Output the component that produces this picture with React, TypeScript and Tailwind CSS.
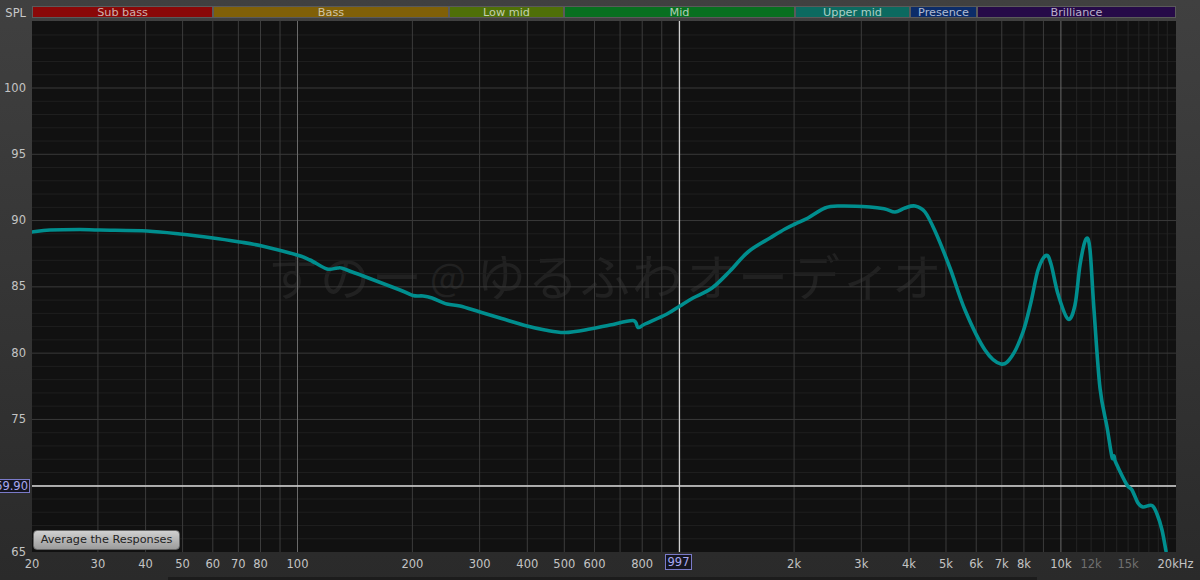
const xOf = (f: number) => 297.5 + Math.log10(f / 100) * 381.7
const yOf = (db: number) => 88 + (100 - db) * 13.257

const bands = [
  { name: 'Sub bass', w: 181, cls: 'bg-[#8a0808] text-[#d0b0ac]' },
  { name: 'Bass', w: 236, cls: 'bg-[#806008] text-[#d0c4a4]' },
  { name: 'Low mid', w: 115, cls: 'bg-[#4f7008] text-[#c4d0ac]' },
  { name: 'Mid', w: 231, cls: 'bg-[#087020] text-[#b0d0b8]' },
  { name: 'Upper mid', w: 115, cls: 'bg-[#0c6a60] text-[#acd0c8]' },
  { name: 'Presence', w: 67, cls: 'bg-[#0c2c68] text-[#b0bcd4]' },
  { name: 'Brilliance', w: 199, cls: 'bg-[#260a48] text-[#bcb0cc]' },
]

const levels = [100, 95, 90, 85, 80, 75, 70, 65]

const majorF = [30, 40, 50, 60, 70, 80, 90, 200, 300, 400, 500, 600, 700, 800, 900, 2000, 3000, 4000, 5000, 6000, 7000, 8000, 9000]
const minorF = [11000, 12000, 13000, 14000, 15000, 16000, 17000, 18000, 19000]
const decades = [100, 1000, 10000]

const xLabels = [
  { t: '20', x: 32 }, { t: '30', f: 30 }, { t: '40', f: 40 }, { t: '50', f: 50 }, { t: '60', f: 60 },
  { t: '70', f: 70 }, { t: '80', f: 80 }, { t: '100', f: 100 }, { t: '200', f: 200 }, { t: '300', f: 300 },
  { t: '400', f: 400 }, { t: '500', f: 500 }, { t: '600', f: 600 }, { t: '800', f: 800 }, { t: '2k', f: 2000 },
  { t: '3k', f: 3000 }, { t: '4k', f: 4000 }, { t: '5k', f: 5000 }, { t: '6k', f: 6000 }, { t: '7k', f: 7000 },
  { t: '8k', f: 8000 }, { t: '10k', f: 10000 },
]

// left edge of each watermark glyph
const markLeft = [268, 320, 372]
const markRight = [476, 528, 580, 632, 686, 738, 790, 842, 892]

// traced from the picture, in page pixels
const curve: [number, number][] = [
  [32, 232], [50, 230], [80, 229.5], [100, 230], [147, 231], [180, 234], [213, 238], [240, 242], [262, 246],
  [297, 255], [310, 260], [327, 269], [338, 268], [347, 270], [400, 290], [413, 295.5], [423, 296], [432, 298],
  [447, 304], [460, 306], [480, 312], [500, 318], [527, 326], [545, 330], [565, 332.5], [590, 329], [610, 325],
  [633, 320.5], [638, 327.5], [645, 324], [667, 314], [680, 306], [693, 298], [712, 288], [730, 271], [748, 252],
  [770, 238], [785, 229], [795, 224], [808, 218], [825, 208], [840, 206], [870, 207], [885, 209], [895, 212],
  [905, 208], [915, 206], [925, 212], [935, 231], [950, 268], [965, 310], [985, 350], [1001, 364], [1012, 356],
  [1023, 332], [1031, 302], [1038, 270], [1046, 255.5], [1051, 264], [1058, 294], [1068, 319], [1075, 305],
  [1080, 265], [1086, 239], [1090, 250], [1094, 310], [1100, 388], [1107, 427], [1112, 457], [1114, 456],
  [1116, 463], [1127, 485], [1132, 490], [1138, 503], [1143, 507], [1152, 505.5], [1157, 514], [1162, 530], [1166, 551],
]

function smooth(pts: [number, number][]) {
  let d = `M${pts[0][0]} ${pts[0][1]}`
  for (let i = 0; i < pts.length - 1; i++) {
    const p0 = pts[Math.max(i - 1, 0)]
    const p1 = pts[i]
    const p2 = pts[i + 1]
    const p3 = pts[Math.min(i + 2, pts.length - 1)]
    const c1x = p1[0] + (p2[0] - p0[0]) / 6
    const c1y = p1[1] + (p2[1] - p0[1]) / 6
    const c2x = p2[0] - (p3[0] - p1[0]) / 6
    const c2y = p2[1] - (p3[1] - p1[1]) / 6
    d += ` C${c1x.toFixed(1)} ${c1y.toFixed(1)} ${c2x.toFixed(1)} ${c2y.toFixed(1)} ${p2[0]} ${p2[1]}`
  }
  return d
}

function Plot() {
  const dbs: number[] = []
  for (let d = 66; d <= 104; d++) dbs.push(d)
  return (
    <svg width="1144" height="531" viewBox="32 21 1144 531" className="block">
      <rect x="32" y="21" width="1144" height="531" fill="#111111" />
      <text y="296" fill="#212121" fontSize="50" fontFamily="'Noto Sans CJK JP', sans-serif">
        <tspan x={markLeft.join(' ')}>すのー</tspan>
        <tspan x="430" fontSize="38" y="291">@</tspan>
        <tspan x={markRight.join(' ')} y="296">ゆるふわオーディオ</tspan>
      </text>
      {dbs.filter(d => d % 5 !== 0).map(d => (
        <line key={d} x1="32" x2="1176" y1={yOf(d)} y2={yOf(d)} stroke="#1f1f1f" strokeWidth="1" />
      ))}
      {minorF.map(f => (
        <line key={f} x1={xOf(f)} x2={xOf(f)} y1="21" y2="552" stroke="#242424" strokeWidth="1" />
      ))}
      {majorF.map(f => (
        <line key={f} x1={xOf(f)} x2={xOf(f)} y1="21" y2="552" stroke="#3c3c3c" strokeWidth="1" />
      ))}
      {[70, 75, 80, 85, 90, 95, 100].map(d => (
        <line key={d} x1="32" x2="1176" y1={yOf(d)} y2={yOf(d)} stroke="#3a3a3a" strokeWidth="1" />
      ))}
      {decades.map(f => (
        <line key={f} x1={xOf(f)} x2={xOf(f)} y1="21" y2="552" stroke="#6a6a6a" strokeWidth="1" />
      ))}
      <line x1="32" x2="1176" y1="486" y2="486" stroke="#d8d8d8" strokeWidth="1.4" />
      <line x1="679.5" x2="679.5" y1="21" y2="552" stroke="#d0d0d0" strokeWidth="1.2" />
      <path d={smooth(curve)} fill="none" stroke="#008e8e" strokeWidth="3.6" strokeLinejoin="round" strokeLinecap="round" />
    </svg>
  )
}

function FreqAxis() {
  return (
    <svg width="1200" height="24" viewBox="0 552 1200 24" className="block">
      <g fill="#c4c4c4" fontSize="11.5" textAnchor="middle" fontFamily="'DejaVu Sans', sans-serif">
        {xLabels.map(l => (
          <text key={l.t} x={l.x ?? xOf(l.f as number)} y="567.5">
            {l.t}
          </text>
        ))}
        <text x={xOf(12000)} y="567.5" fill="#707070">12k</text>
        <text x={xOf(15000)} y="567.5" fill="#707070">15k</text>
        <text x="1175.5" y="567.5">20kHz</text>
      </g>
    </svg>
  )
}

export default function App() {
  return (
    <div className="w-[1200px] h-[580px] overflow-hidden flex flex-col bg-gradient-to-b from-[#404040] to-[#2a2a2a] font-['DejaVu_Sans',sans-serif] text-[#c4c4c4]">
      {/* Band strip */}
      <div className="flex h-[21px] pt-[6px] pb-[3px]">
        <div className="w-[32px] pr-[6px] text-right text-[11.5px] leading-[14px] text-[#c8c8c8]">SPL</div>
        <div className="flex">
          {bands.map(b => (
            <div
              key={b.name}
              style={{ width: b.w }}
              className={`h-[12px] border border-[#5a5a5a] text-center text-[11.25px] leading-[11px] ${b.cls}`}
            >
              {b.name}
            </div>
          ))}
        </div>
      </div>

      {/* Plot with level axis */}
      <div className="flex h-[531px]">
        <div className="relative w-[32px] flex flex-col pt-[34px]">
          {levels.map(d => (
            <div key={d} className="h-[66.3px] shrink-0 flex items-center justify-end pr-[6px] text-[11.5px]">
              {d === 70 ? '' : d}
            </div>
          ))}
          <div className="absolute left-[-1px] right-[2px] top-[458px] h-[14px] overflow-hidden flex justify-end border border-[#7a7ac8] bg-[#15151f] pr-[1px] text-[11.5px] leading-[12px] whitespace-nowrap text-[#a8a8f0]">
            69.90
          </div>
        </div>
        <div className="relative w-[1144px]">
          <Plot />
          <button className="absolute left-[1px] bottom-[2px] h-[20px] w-[147px] rounded-[4px] border border-[#666666] bg-gradient-to-b from-[#d0d0d0] to-[#9c9c9c] text-[11.25px] leading-[16px] text-[#222222]">
            Average the Responses
          </button>
        </div>
      </div>

      {/* Frequency axis */}
      <div className="relative h-[28px] flex flex-col">
        <FreqAxis />
        <div className="ml-[168px] mt-[1px] h-[3px] w-[869px] bg-[#1c1c1c]" />
        <div className="absolute left-[665px] top-[2px] h-[16px] w-[27px] border border-[#7a7ac8] bg-[#15151f] text-center text-[11.5px] leading-[14px] text-[#a8a8f0]">
          997
        </div>
      </div>
    </div>
  )
}
